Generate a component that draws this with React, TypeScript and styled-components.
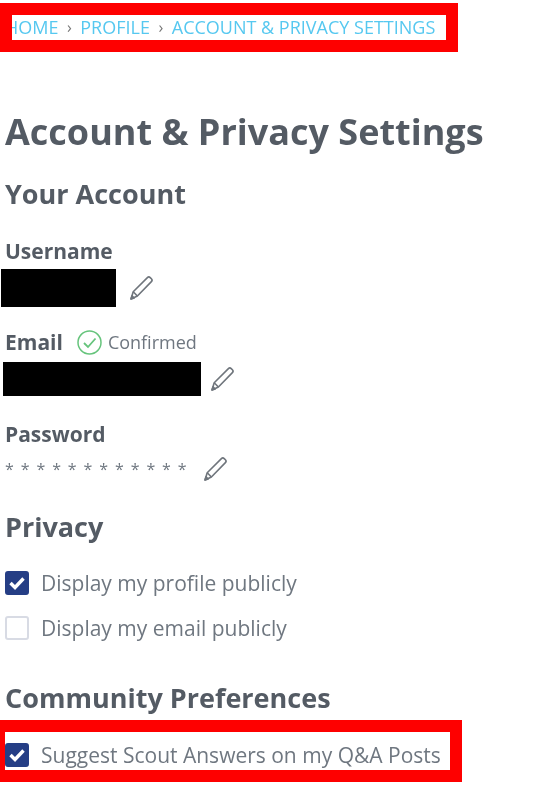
import React from "react";
import styled, { createGlobalStyle } from "styled-components";

const Global = createGlobalStyle`
  html, body { margin: 0; padding: 0; background: #fff; }
  body { font-family: "Open Sans", "Liberation Sans", sans-serif; color: #545b64; }
`;

const Page = styled.div`
  width: 558px;
  height: 807px;
  overflow: hidden;
  padding-top: 3px;
  box-sizing: border-box;
  filter: blur(0.35px);
`;

const Crumbs = styled.nav`
  width: 458px;
  height: 49px;
  box-sizing: border-box;
  border: 12px solid #fe0000;
  display: flex;
  align-items: center;
  gap: 8.5px;
  overflow: hidden;
  white-space: nowrap;
  font-size: 18px;
  padding-bottom: 2px;
`;

const Crumb = styled.span<{ $clip?: boolean }>`
  color: #56c8f0;
  margin-left: ${(p) => (p.$clip ? "-7px" : "0")};
`;

const Sep = styled.span`
  color: #777;
  font-size: 16px;
`;

const Title = styled.h1`
  margin: 58px 0 0 5px;
  font-size: 36px;
  line-height: 44px;
  font-weight: 700;
`;

const Section = styled.h2<{ $top: number }>`
  margin: ${(p) => p.$top}px 0 0 5px;
  font-size: 27px;
  line-height: 36px;
  font-weight: 700;
`;

const Label = styled.div<{ $top: number; $bottom?: number }>`
  margin: ${(p) => p.$top}px 0 ${(p) => p.$bottom ?? 4}px 5px;
  display: flex;
  align-items: center;
  font-size: 21px;
  line-height: 28px;
  font-weight: 700;
`;

const Status = styled.span`
  display: flex;
  align-items: center;
  margin-left: 14px;
  gap: 6px;
  font-size: 18px;
  font-weight: 400;
  color: #6f7780;
`;

const ValueRow = styled.div<{ $left: number; $gap: number; $h: number }>`
  display: flex;
  align-items: center;
  height: ${(p) => p.$h}px;
  margin-left: ${(p) => p.$left}px;
  gap: ${(p) => p.$gap}px;
`;

const Redacted = styled.div<{ $w: number; $h: number }>`
  width: ${(p) => p.$w}px;
  height: ${(p) => p.$h}px;
  background: #000;
`;

const Mask = styled.span`
  font-size: 16px;
  letter-spacing: 6.9px;
  color: #6f7780;
`;

const PencilIcon = styled.svg`
  width: 26px;
  height: 26px;
  flex: none;
  fill: none;
  stroke: #6f757c;
  stroke-width: 1.6;
  stroke-linejoin: round;
`;

const Option = styled.label<{ $top: number }>`
  margin: ${(p) => p.$top}px 0 0 5px;
  display: flex;
  align-items: center;
  gap: 12px;
  height: 28px;
  font-size: 21px;
  color: #6f7780;
`;

const Box = styled.span<{ $on?: boolean }>`
  width: 24px;
  height: 24px;
  box-sizing: border-box;
  border-radius: 3px;
  flex: none;
  display: flex;
  align-items: center;
  justify-content: center;
  background: ${(p) => (p.$on ? "#253e85" : "#fff")};
  border: 2px solid ${(p) => (p.$on ? "#253e85" : "#d8dbe4")};
`;

const Highlight = styled.div`
  margin-top: 4px;
  width: 462px;
  height: 62px;
  box-sizing: border-box;
  border: solid #fe0000;
  border-width: 12px 12px 12px 5px;
  display: flex;
  align-items: center;
  padding-top: 7px;
  & > label { margin: 0; }
`;

const Pencil = () => (
  <PencilIcon viewBox="0 0 26 26">
    <path d="M3 24 L5.2 16.7 L19.4 2.6 Q20.8 1.2 22.2 2.6 L23.4 3.8 Q24.8 5.2 23.4 6.6 L9.4 21 Z" />
    <path d="M5.2 16.7 L9.4 21" />
    <path d="M3 24 L4 20.8 L6.2 23 Z" fill="#6f757c" />
  </PencilIcon>
);

const Check = () => (
  <svg width="16" height="14" viewBox="0 0 16 14">
    <path d="M1.5 7 L6 11.5 L14.5 2.5" fill="none" stroke="#fff" strokeWidth="3.4" />
  </svg>
);

const Confirmed = () => (
  <svg width="25" height="25" viewBox="0 0 25 25">
    <circle cx="12.5" cy="12.5" r="11.5" fill="none" stroke="#66c47c" strokeWidth="1.5" />
    <path d="M7 13 L11 17 L18.5 8.5" fill="none" stroke="#66c47c" strokeWidth="1.8" />
  </svg>
);

export default function App() {
  return (
    <Page>
      <Global />
      <Crumbs>
        <Crumb $clip>HOME</Crumb>
        <Sep>›</Sep>
        <Crumb>PROFILE</Crumb>
        <Sep>›</Sep>
        <Crumb>ACCOUNT &amp; PRIVACY SETTINGS</Crumb>
      </Crumbs>
      <Title>Account &amp; Privacy Settings</Title>
      <Section $top={22}>Your Account</Section>
      <Label $top={25}>Username</Label>
      <ValueRow $left={1} $gap={12} $h={38}>
        <Redacted $w={115} $h={38} />
        <Pencil />
      </ValueRow>
      <Label $top={21} $bottom={6}>
        Email
        <Status>
          <Confirmed />
          Confirmed
        </Status>
      </Label>
      <ValueRow $left={3} $gap={8} $h={34}>
        <Redacted $w={198} $h={34} />
        <Pencil />
      </ValueRow>
      <Label $top={24}>Password</Label>
      <ValueRow $left={5} $gap={8} $h={34}>
        <Mask>************</Mask>
        <Pencil />
      </ValueRow>
      <Section $top={23}>Privacy</Section>
      <Option $top={24}><Box $on><Check /></Box>Display my profile publicly</Option>
      <Option $top={17}><Box />Display my email publicly</Option>
      <Section $top={38}>Community Preferences</Section>
      <Highlight>
        <Option $top={0}><Box $on><Check /></Box>Suggest Scout Answers on my Q&amp;A Posts</Option>
      </Highlight>
    </Page>
  );
}
